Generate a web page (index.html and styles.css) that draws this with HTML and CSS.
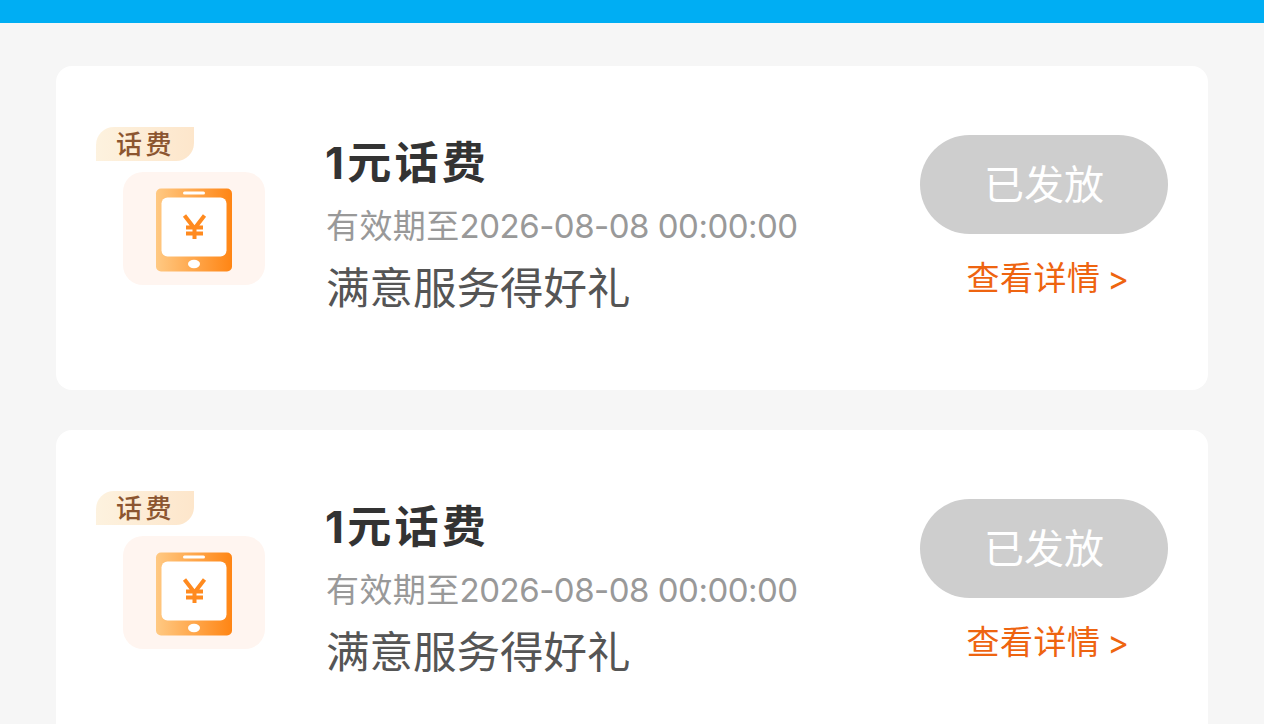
FILE: index.html
```html
<!DOCTYPE html>
<html lang="zh-CN">
<head>
<meta charset="utf-8">
<title>奖品</title>
<link rel="stylesheet" href="styles.css">
</head>
<body>
<svg class="defs" width="0" height="0" aria-hidden="true">
  <defs>
    <linearGradient id="phoneGrad" x1="0" x2="1" y1="0" y2="0">
      <stop offset="0" stop-color="#ffc983"/>
      <stop offset="1" stop-color="#ff8514"/>
    </linearGradient>
  </defs>
</svg>
<header class="topbar"></header>
<main class="list">
  <article class="card">
    <div class="thumb">
      <span class="tag">话费</span>
      <div class="tile">
        <svg class="phone" viewBox="0 0 78 84" width="78" height="84">
          <rect x="1" y="0.5" width="76" height="83" rx="5" fill="url(#phoneGrad)"/>
          <rect x="28" y="3.5" width="22" height="3" rx="1.5" fill="#fff"/>
          <rect x="6.5" y="9.5" width="65" height="59" rx="6" fill="#fff"/>
          <ellipse cx="39" cy="76" rx="6" ry="4.2" fill="#fff"/>
          <path d="M29.5 27.5 39.5 40.5 49.5 27.5M39.5 40.5V51M31 39.5H48M31 45.5H48" fill="none" stroke="#ff8a1f" stroke-width="4"/>
        </svg>
      </div>
    </div>
    <div class="info">
      <h2 class="title">1元话费</h2>
      <p class="expiry">有效期至<span class="date">2026-08-08 00:00:00</span></p>
      <p class="desc">满意服务得好礼</p>
    </div>
    <div class="actions">
      <button class="status" type="button">已发放</button>
      <a class="detail">查看详情 &gt;</a>
    </div>
  </article>
  <article class="card">
    <div class="thumb">
      <span class="tag">话费</span>
      <div class="tile">
        <svg class="phone" viewBox="0 0 78 84" width="78" height="84">
          <rect x="1" y="0.5" width="76" height="83" rx="5" fill="url(#phoneGrad)"/>
          <rect x="28" y="3.5" width="22" height="3" rx="1.5" fill="#fff"/>
          <rect x="6.5" y="9.5" width="65" height="59" rx="6" fill="#fff"/>
          <ellipse cx="39" cy="76" rx="6" ry="4.2" fill="#fff"/>
          <path d="M29.5 27.5 39.5 40.5 49.5 27.5M39.5 40.5V51M31 39.5H48M31 45.5H48" fill="none" stroke="#ff8a1f" stroke-width="4"/>
        </svg>
      </div>
    </div>
    <div class="info">
      <h2 class="title">1元话费</h2>
      <p class="expiry">有效期至<span class="date">2026-08-08 00:00:00</span></p>
      <p class="desc">满意服务得好礼</p>
    </div>
    <div class="actions">
      <button class="status" type="button">已发放</button>
      <a class="detail">查看详情 &gt;</a>
    </div>
  </article>
</main>
</body>
</html>
```
FILE: styles.css
```css
* { box-sizing: border-box; }
html, body { height: 100%; overflow: hidden; }
body {
  margin: 0;
  background: #f6f6f6;
  font-family: Inter, "Noto Sans CJK SC", sans-serif;
}
.defs { display: block; height: 0; }
.topbar { height: 23px; background: #00aef3; }
.list {
  display: flex;
  flex-direction: column;
  gap: 40px;
  padding: 43px 56px 0;
}
.card {
  display: flex;
  height: 324px;
  flex-shrink: 0;
  padding: 61px 40px 0;
  background: #fff;
  border-radius: 16px;
}
.thumb { width: 230px; flex-shrink: 0; }
.tag {
  display: block;
  width: 98px;
  height: 34px;
  padding-left: 20px;
  border-radius: 18px 0 18px 0;
  background: linear-gradient(90deg, #fdf2df, #fde6cb);
  color: #8c5530;
  font-size: 26px;
  font-weight: 500;
  line-height: 35px;
  letter-spacing: 3.4px;
}
.tile {
  display: flex;
  justify-content: center;
  width: 142px;
  height: 113px;
  margin: 11px 0 0 27px;
  padding-top: 16px;
  border-radius: 20px;
  background: #fff5f0;
}
.phone { display: block; }
.info { flex: 1; min-width: 0; }
.title {
  margin: 5px 0 0 -1px;
  color: #333;
  font-size: 44px;
  font-weight: 700;
  line-height: 62px;
  letter-spacing: 3.3px;
}
.expiry {
  margin: 9px 0 0;
  color: #999;
  font-size: 33px;
  line-height: 46px;
  letter-spacing: 0.4px;
}
.date { letter-spacing: -0.5px; }
.desc {
  margin: 9px 0 0;
  color: #555;
  font-size: 43.5px;
  line-height: 60px;
}
.actions {
  display: flex;
  flex-direction: column;
  align-items: center;
  width: 248px;
  flex-shrink: 0;
  padding-top: 8px;
}
.status {
  width: 248px;
  height: 99px;
  padding: 0;
  border: 0;
  border-radius: 50px;
  background: #cecece;
  color: #fff;
  font-family: inherit;
  font-size: 40px;
  line-height: 99px;
}
.detail {
  margin: 20px 0 0 8px;
  color: #ee6410;
  font-size: 33px;
  line-height: 48px;
  letter-spacing: 0.5px;
  word-spacing: -3px;
}
```
